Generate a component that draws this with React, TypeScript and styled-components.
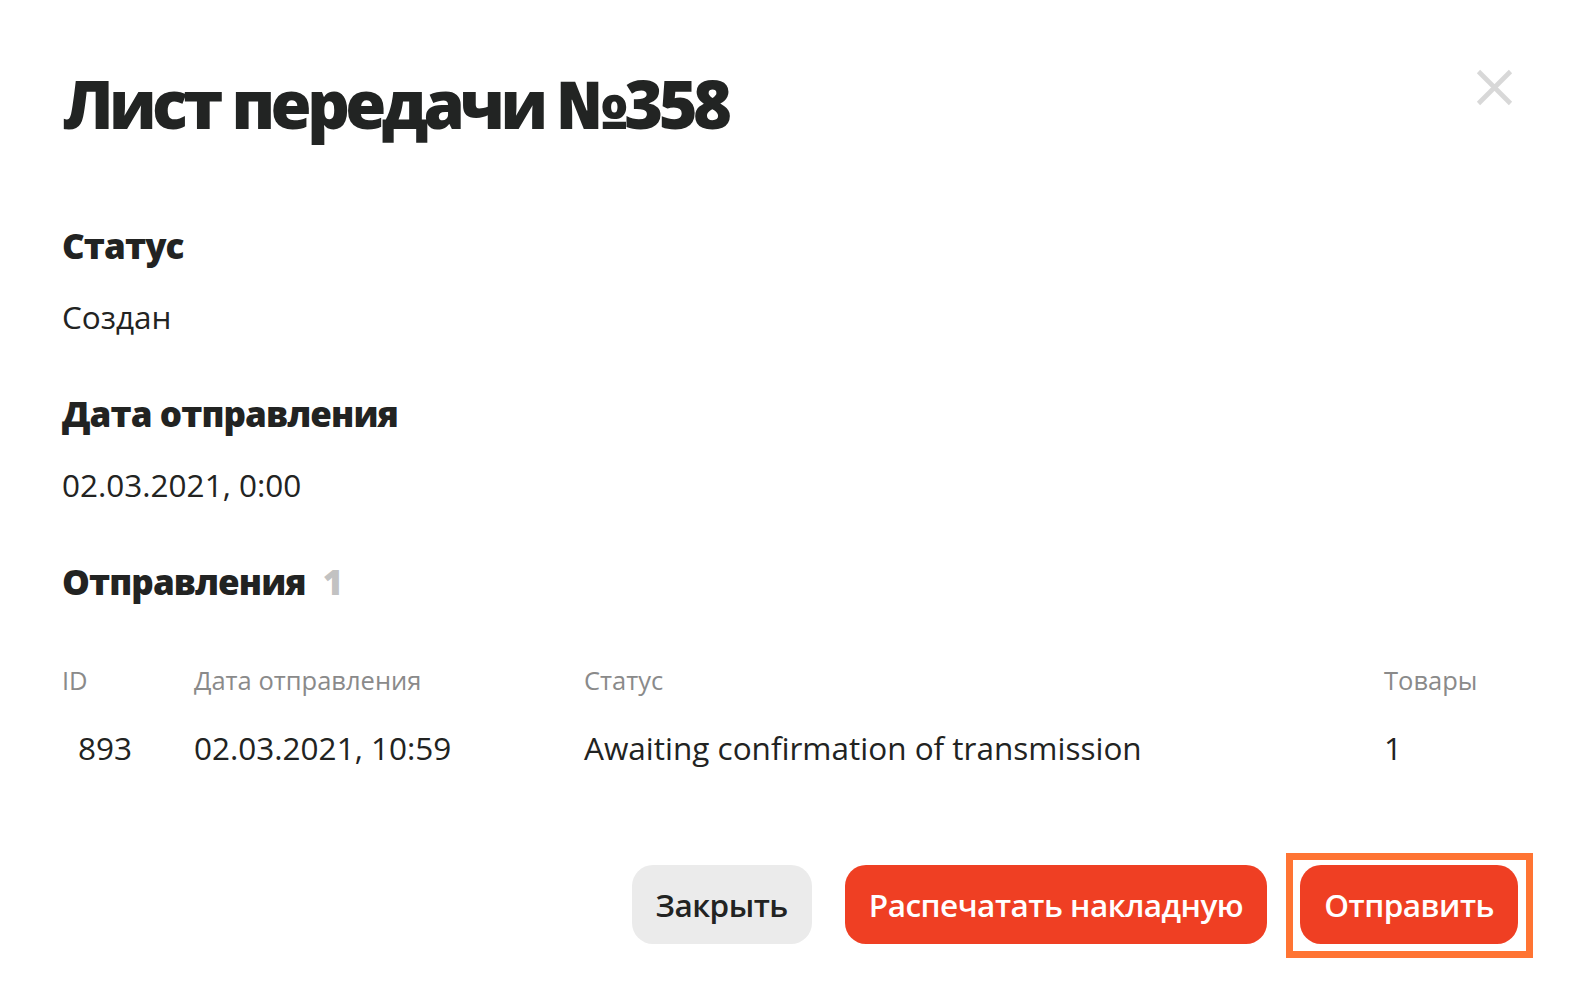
import React from "react";
import styled, { createGlobalStyle } from "styled-components";

const GlobalStyle = createGlobalStyle`
  html, body {
    margin: 0;
    padding: 0;
    background: #ffffff;
  }
  body {
    font-family: "Open Sans", "Noto Sans", "Liberation Sans", sans-serif;
    color: #222322;
    -webkit-font-smoothing: antialiased;
  }
  * { box-sizing: border-box; }
`;

const Page = styled.div`
  width: 1582px;
  min-height: 1008px;
  padding: 64px 64px 0 62px;
  display: flex;
  flex-direction: column;
`;

const Header = styled.header`
  display: flex;
  justify-content: space-between;
  align-items: flex-start;
`;

const Title = styled.h1`
  margin: 0 0 0 1px;
  font-size: 66.5px;
  line-height: 78px;
  font-weight: 800;
  letter-spacing: -4.6px;
  color: #222423;
`;

const CloseButton = styled.button`
  margin: 5px 5px 0 0;
  width: 37px;
  height: 37px;
  padding: 0;
  border: none;
  background: transparent;
  cursor: pointer;
  display: flex;
`;

const Section = styled.section<{ $top: number }>`
  margin-top: ${(p) => p.$top}px;
  display: flex;
  flex-direction: column;
  gap: 27px;
`;

const Heading = styled.h2`
  margin: 0;
  font-size: 35px;
  line-height: 44px;
  font-weight: 800;
  letter-spacing: -0.9px;
  color: #222322;
  display: flex;
  align-items: baseline;
`;

const Count = styled.span`
  margin-left: 17px;
  color: #c2c2c2;
`;

const Value = styled.div`
  font-size: 31.5px;
  line-height: 44px;
  font-weight: 400;
  color: #222322;
`;

const Table = styled.div`
  margin-top: 59px;
  display: grid;
  grid-template-columns: 132px 390px 1fr 134px;
  row-gap: 29px;
`;

const HeadCell = styled.div`
  font-size: 25.5px;
  line-height: 34px;
  color: #8a8a8a;
  font-weight: 400;
`;

const Cell = styled.div<{ $indent?: number }>`
  font-size: 31.5px;
  line-height: 44px;
  color: #222322;
  padding-left: ${(p) => p.$indent ?? 0}px;
`;

const Actions = styled.div`
  margin-top: 95px;
  display: flex;
  justify-content: flex-end;
  gap: 33px;
`;

const Button = styled.button<{ $variant: "secondary" | "primary"; $focused?: boolean }>`
  position: relative;
  height: 79px;
  padding: 0 24px;
  border: none;
  border-radius: 21px;
  font-family: inherit;
  font-size: 31.5px;
  font-weight: 600;
  letter-spacing: -0.5px;
  cursor: pointer;
  outline: none;
  background: ${(p) => (p.$variant === "primary" ? "#ef3f23" : "#ebebeb")};
  color: ${(p) => (p.$variant === "primary" ? "#ffffff" : "#222322")};

  &::after {
    content: "";
    display: ${(p) => (p.$focused ? "block" : "none")};
    position: absolute;
    top: -12px;
    left: -14px;
    right: -15px;
    bottom: -14px;
    border: 7.5px solid #ff7433;
    pointer-events: none;
  }
`;

const rows = [
  { id: "893", date: "02.03.2021, 10:59", status: "Awaiting confirmation of transmission", items: "1" },
];

export default function App() {
  return (
    <>
      <GlobalStyle />
      <Page>
        <Header>
          <Title>Лист передачи №358</Title>
          <CloseButton aria-label="Закрыть">
            <svg width="37" height="37" viewBox="0 0 37 37">
              <path d="M2.5 2.5 L34.5 34.5 M34.5 2.5 L2.5 34.5" stroke="#d8d8d8" strokeWidth="4.6" fill="none" />
            </svg>
          </CloseButton>
        </Header>

        <Section $top={82}>
          <Heading>Статус</Heading>
          <Value>Создан</Value>
        </Section>

        <Section $top={53}>
          <Heading>Дата отправления</Heading>
          <Value>02.03.2021, 0:00</Value>
        </Section>

        <Section $top={53}>
          <Heading>
            Отправления<Count>1</Count>
          </Heading>
        </Section>

        <Table>
          <HeadCell>ID</HeadCell>
          <HeadCell>Дата отправления</HeadCell>
          <HeadCell>Статус</HeadCell>
          <HeadCell>Товары</HeadCell>
          {rows.map((r) => (
            <React.Fragment key={r.id}>
              <Cell $indent={16}>{r.id}</Cell>
              <Cell>{r.date}</Cell>
              <Cell>{r.status}</Cell>
              <Cell>{r.items}</Cell>
            </React.Fragment>
          ))}
        </Table>

        <Actions>
          <Button $variant="secondary">Закрыть</Button>
          <Button $variant="primary">Распечатать накладную</Button>
          <Button $variant="primary" $focused>
            Отправить
          </Button>
        </Actions>
      </Page>
    </>
  );
}
